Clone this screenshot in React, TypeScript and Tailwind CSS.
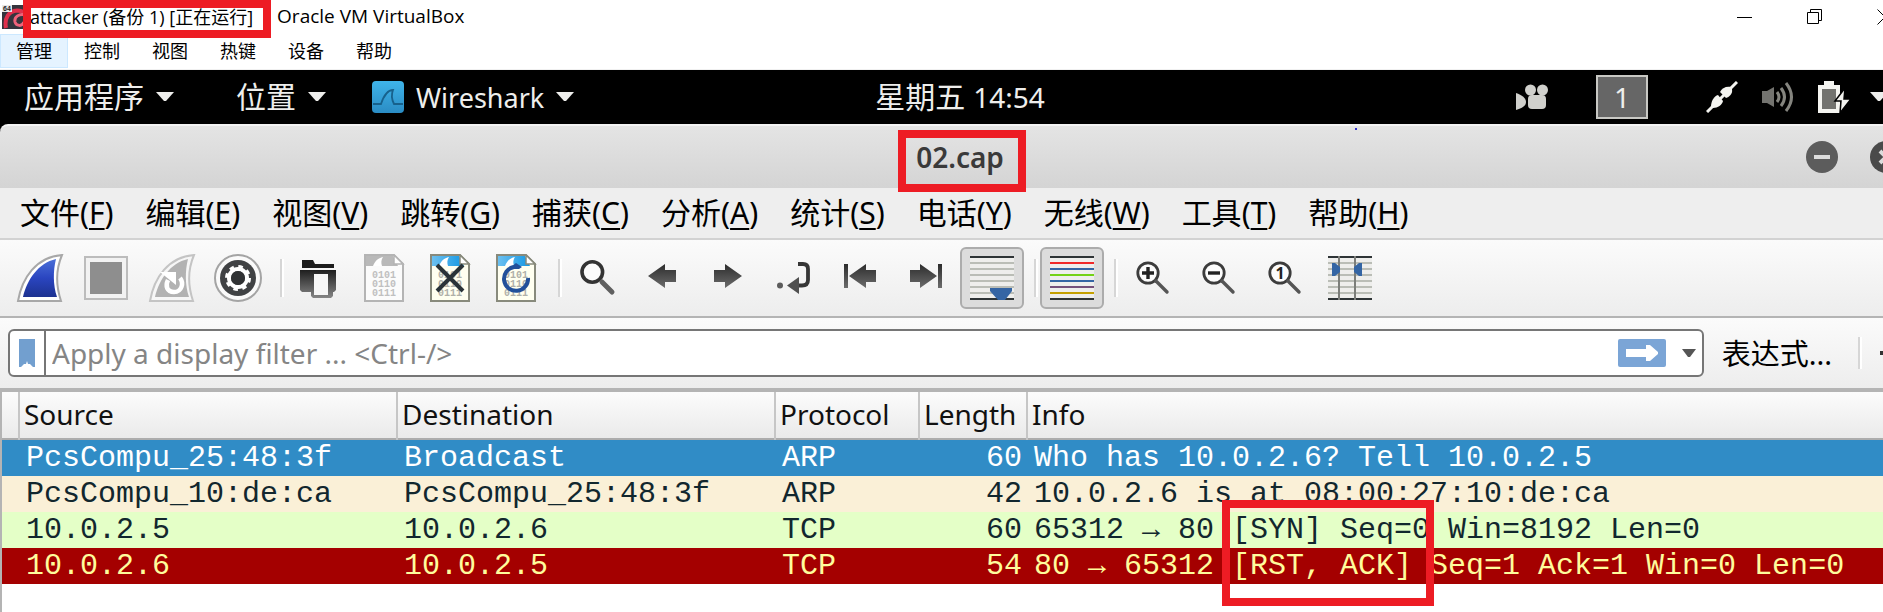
import type { ReactNode } from "react";

const hostMenus = ["管理", "控制", "视图", "热键", "设备", "帮助"];

const menus: [string, string][] = [
  ["文件", "F"],
  ["编辑", "E"],
  ["视图", "V"],
  ["跳转", "G"],
  ["捕获", "C"],
  ["分析", "A"],
  ["统计", "S"],
  ["电话", "Y"],
  ["无线", "W"],
  ["工具", "T"],
  ["帮助", "H"],
];

const packets = [
  { source: "PcsCompu_25:48:3f", destination: "Broadcast", protocol: "ARP", length: 60, info: "Who has 10.0.2.6? Tell 10.0.2.5", tone: "bg-[#308cc6] text-white" },
  { source: "PcsCompu_10:de:ca", destination: "PcsCompu_25:48:3f", protocol: "ARP", length: 42, info: "10.0.2.6 is at 08:00:27:10:de:ca", tone: "bg-[#faf0d7] text-[#12272e]" },
  { source: "10.0.2.5", destination: "10.0.2.6", protocol: "TCP", length: 60, info: "65312 → 80 [SYN] Seq=0 Win=8192 Len=0", tone: "bg-[#e4ffc7] text-[#12272e]" },
  { source: "10.0.2.6", destination: "10.0.2.5", protocol: "TCP", length: 54, info: "80 → 65312 [RST, ACK] Seq=1 Ack=1 Win=0 Len=0", tone: "bg-[#a40000] text-[#fffc9c]" },
];

function Caret() {
  return (
    <svg className="h-[10px] w-[18px] shrink-0" viewBox="0 0 18 10" aria-hidden="true">
      <path d="M0 0H18L10 9H8Z" fill="#eeeeec" />
    </svg>
  );
}

function Icon({ children }: { children: ReactNode }) {
  return (
    <svg className="size-12" viewBox="0 0 48 48" fill="none" aria-hidden="true">
      {children}
    </svg>
  );
}

function Tool({ label, active, children }: { label: string; active?: boolean; children: ReactNode }) {
  return (
    <button
      type="button"
      aria-label={label}
      className={
        active
          ? "flex h-[62px] w-16 shrink-0 items-center justify-center rounded-md border-2 border-[#acacac] bg-[#dcdcdc]"
          : "flex h-[62px] w-16 shrink-0 items-center justify-center"
      }
    >
      <Icon>{children}</Icon>
    </button>
  );
}

function Divider() {
  return (
    <div className="flex h-[38px] w-3 shrink-0 justify-end">
      <div className="w-1 border-l-2 border-[#d6d6d6] bg-white" />
    </div>
  );
}

const FIN = "M46 1C40 15 40 32 45 47H2C6 24 20 3 46 1Z";

function Doc({ muted }: { muted?: boolean }) {
  const edge = muted ? "#b4b4b4" : "#888a7c";
  const digits = muted ? "#c0c0c0" : "#b0b0a8";
  return (
    <>
      <path d="M5 1H34L43 10V47H5Z" fill={muted ? "#fbfbfb" : "#fffff0"} stroke={edge} strokeWidth="2" />
      <path d="M6 2H33L38 12H6Z" fill={muted ? "#b9b9b9" : "url(#banner)"} />
      <path d="M13 12C15 7 18 4 23 3C21 6 21 9 22 12Z" fill="#fff" />
      <path d="M34 1V10H43Z" fill="#fff" stroke={edge} strokeWidth="1.5" />
      <g fill={digits} fontFamily="Liberation Mono, monospace" fontSize="10" fontWeight="700">
        <text x="12" y="24">0101</text>
        <text x="12" y="33">0110</text>
        <text x="12" y="42">0111</text>
      </g>
    </>
  );
}

function Lens({ children }: { children: ReactNode }) {
  return (
    <>
      <circle cx="20" cy="19" r="10.2" fill="#fcfcfc" stroke="#3c3c3c" strokeWidth="2.8" />
      <path d="M28 27L39 38" stroke="#555" strokeWidth="3.4" strokeLinecap="round" />
      {children}
    </>
  );
}

function Rows({ colors }: { colors: string[] }) {
  return (
    <>
      <rect x="2" y="2" width="44" height="44" fill="#eeeeec" />
      {["#2e3436", ...colors, "#2e3436"].map((color, i) => (
        <rect key={i} x="2" y={2 + i * 6} width="44" height="2" fill={color} />
      ))}
    </>
  );
}

const GREY_ROWS = ["#babdb6", "#babdb6", "#babdb6", "#babdb6", "#babdb6", "#babdb6"];
const COLOR_ROWS = ["#ef2929", "#3465a4", "#73d216", "#3465a4", "#75507b", "#c4a000"];

function Gradients() {
  return (
    <svg className="absolute size-0" aria-hidden="true">
      <defs>
        <linearGradient id="fin" x1="0" y1="0" x2="0" y2="1">
          <stop offset="0" stopColor="#4a6fd8" />
          <stop offset="0.5" stopColor="#2a45c0" />
          <stop offset="1" stopColor="#1d3290" />
        </linearGradient>
        <linearGradient id="banner" x1="0" y1="0" x2="1" y2="0">
          <stop offset="0" stopColor="#6cc0f0" />
          <stop offset="1" stopColor="#1598e4" />
        </linearGradient>
        <linearGradient id="steel" x1="0" y1="0" x2="0" y2="1">
          <stop offset="0" stopColor="#2c2c2c" />
          <stop offset="1" stopColor="#6c6c6c" />
        </linearGradient>
        <linearGradient id="folder" x1="0" y1="0" x2="0" y2="1">
          <stop offset="0" stopColor="#1e1e1e" />
          <stop offset="1" stopColor="#868686" />
        </linearGradient>
        <linearGradient id="app" x1="0" y1="0" x2="0" y2="1">
          <stop offset="0" stopColor="#3fb4ea" />
          <stop offset="1" stopColor="#2a8cc4" />
        </linearGradient>
      </defs>
    </svg>
  );
}

function HostWindow() {
  return (
    <header className="font-['Open_Sans','Noto_Sans_CJK_SC',sans-serif] text-lg text-black">
      <div className="relative flex h-[34px] items-center pl-[2px]">
        <svg className="size-6 shrink-0" viewBox="0 0 24 24" aria-hidden="true">
          <rect width="24" height="24" fill="#35353d" />
          <path d="M4 23C2 13 7 6 15 5.500C19 5.500 22 7 24 10" fill="none" stroke="#e0304c" strokeWidth="4" />
          <path d="M24 10C17 8 12 12 13 17C14 21 20 22 22 17" fill="none" stroke="#f0637b" strokeWidth="3" />
          <rect width="10" height="7" fill="#e8e8e8" />
          <text x="1" y="6" fontSize="7" fontWeight="700" fill="#222" fontFamily="Liberation Sans, sans-serif">64</text>
        </svg>
        <h1 className="flex items-center gap-6 pl-1 whitespace-nowrap">
          <span>attacker (备份 1) [正在运行]</span>
          <span className="text-[19px]">Oracle VM VirtualBox</span>
        </h1>
        <div className="absolute top-0 left-[23px] h-[38px] w-[248px] border-8 border-[#ed1c24]" />
        <div className="ml-auto flex">
          <button type="button" aria-label="最小化" className="flex w-[70px] justify-center">
            <svg className="size-4" viewBox="0 0 16 16" aria-hidden="true"><path d="M0 8.5H15" stroke="#000" /></svg>
          </button>
          <button type="button" aria-label="还原" className="flex w-[70px] justify-center">
            <svg className="size-4" viewBox="0 0 16 16" fill="none" stroke="#000" aria-hidden="true">
              <path d="M0.5 3.5H11.5V14.5H0.5ZM3.5 3V0.5H14.5V11.5H12" />
            </svg>
          </button>
          <button type="button" aria-label="关闭" className="flex w-[70px] justify-center">
            <svg className="size-4" viewBox="0 0 16 16" stroke="#000" aria-hidden="true"><path d="M0.5 0.5L15.5 15.5M15.5 0.5L0.5 15.5" /></svg>
          </button>
        </div>
      </div>
      <nav className="flex h-9 items-start border-b border-[#f0f0f0]">
        {hostMenus.map((name, i) => (
          <button
            key={name}
            type="button"
            className={
              i === 0
                ? "flex h-[34px] w-[68px] items-center justify-center border border-[#cce8ff] bg-[#e5f3ff]"
                : "flex h-[34px] w-[68px] items-center justify-center"
            }
          >
            {name}
          </button>
        ))}
      </nav>
    </header>
  );
}

function Panel() {
  return (
    <div className="grid h-[54px] grid-cols-[1fr_auto_1fr] items-center bg-black text-[30px] leading-none text-[#eeeeec]">
      <div className="flex items-center whitespace-nowrap">
        <button type="button" className="flex items-center gap-3 pl-6">应用程序<Caret /></button>
        <button type="button" className="flex items-center gap-3 pl-[62px]">位置<Caret /></button>
        <button type="button" className="flex items-center gap-3 pl-[46px]">
          <svg className="size-8" viewBox="0 0 32 32" aria-hidden="true">
            <rect width="32" height="32" rx="4" fill="url(#app)" />
            <path d="M1 23H9C11 17 14 9 21 9C19 14 20 19 22 23H31" fill="none" stroke="#17618c" strokeWidth="1.8" />
          </svg>
          <span className="text-[27px]">Wireshark</span>
          <Caret />
        </button>
      </div>
      <time className="flex items-center gap-2 whitespace-nowrap">
        星期五<span className="text-[28px]">14:54</span>
      </time>
      <div className="flex items-center justify-end pr-8">
        <svg className="mr-12 size-8" viewBox="0 0 32 32" fill="#d0d0cc" aria-hidden="true">
          <circle cx="14.5" cy="9" r="5.5" />
          <circle cx="26.5" cy="9" r="5.5" />
          <rect x="12" y="14" width="18" height="14" rx="4" />
          <path d="M0 12C6 14 10 17 10 21C10 25 6 27 0 29Z" />
        </svg>
        <button type="button" className="mr-[58px] h-11 w-[52px] border-2 border-[#c8c8c4] bg-[#666] text-[28px] leading-none">1</button>
        <svg className="mr-6 size-8" viewBox="0 0 32 32" fill="#f4f4f0" aria-hidden="true">
          <path d="M1 31L31 1" stroke="#f4f4f0" strokeWidth="3" />
          <path d="M5 26C5 20 8 15 12 14L17 20C16 24 12 27 7 27Z" />
          <path d="M14 11C16 7 20 5 25 6L26 8C27 13 23 16 20 17Z" />
        </svg>
        <svg className="mr-6 size-8" viewBox="0 0 32 32" fill="none" aria-hidden="true">
          <path d="M0 10H5L12 6V26L5 22H0Z" fill="#73736f" />
          <path d="M15 11Q19 16 15 21M19 7Q26 16 19 25M24 2Q35 16 24 30" stroke="#85857f" strokeWidth="3" />
        </svg>
        <svg className="mr-5 size-8" viewBox="0 0 32 32" aria-hidden="true">
          <path d="M6 0H16V4H22V32H0V4H6Z" fill="#f4f4f0" />
          <rect x="4" y="8" width="14" height="20" fill="#73736f" />
          <path d="M27 7L17 20H23L22 32L33 18H26Z" fill="#f4f4f0" stroke="#000" strokeWidth="1.5" />
        </svg>
        <Caret />
      </div>
    </div>
  );
}

function TitleBar() {
  return (
    <div className="relative grid h-[64px] grid-cols-[1fr_auto_1fr] items-center rounded-t-lg border-t-2 border-[#f4f4f4] bg-linear-to-b from-[#e4e4e4] to-[#d4d4d4]">
      <span />
      <h2 className="relative flex h-full items-center text-[28px] leading-none font-semibold text-[#3a3a3a]">
        02.cap
        <div className="absolute top-1 -left-[18px] h-[62px] w-32 border-8 border-[#ed1c24]" />
      </h2>
      <div className="flex justify-end gap-8 pr-[18px]">
        <button type="button" aria-label="最小化">
          <svg className="size-8" viewBox="0 0 32 32" aria-hidden="true">
            <circle cx="16" cy="16" r="16" fill="#5c5c5c" />
            <path d="M8 16H24" stroke="#dcdcdc" strokeWidth="4" />
          </svg>
        </button>
        <button type="button" aria-label="关闭">
          <svg className="size-8" viewBox="0 0 32 32" aria-hidden="true">
            <circle cx="16" cy="16" r="16" fill="#4a4a4a" />
            <path d="M10 10L22 22M22 10L10 22" stroke="#dcdcdc" strokeWidth="4" />
          </svg>
        </button>
      </div>
      <span className="absolute top-[2px] left-[1355px] size-[2px] bg-[#3030d0]" />
    </div>
  );
}

function Toolbar() {
  return (
    <div className="flex h-[78px] items-center gap-[2px] border-b-2 border-[#b4b4b4] bg-linear-to-b from-[#fbfbfb] to-[#ededed] pl-2">
      <Tool label="开始捕获">
        <path d={FIN} fill="#fff" stroke="#a8a8a8" strokeWidth="2" />
        <path d="M40 5C37 17 37 31 41 43H7C11 26 22 9 40 5Z" fill="url(#fin)" />
      </Tool>
      <Tool label="停止捕获">
        <rect x="3" y="3" width="42" height="42" fill="#f2f2f2" stroke="#bcbcbc" strokeWidth="2" />
        <rect x="8" y="8" width="32" height="32" fill="#8e8e8e" />
      </Tool>
      <Tool label="重新开始捕获">
        <path d={FIN} fill="#f6f6f6" stroke="#c4c4c4" strokeWidth="2" />
        <path d="M40 5C37 17 37 31 41 43H7C11 26 22 9 40 5Z" fill="#b2b2b2" />
        <path d="M32 24C36 29 34 38 26 38C19 38 17 32 20 26" stroke="#fff" strokeWidth="4.5" />
        <path d="M12 18H28V31Z" fill="#fff" />
      </Tool>
      <Tool label="捕获选项">
        <circle cx="24" cy="24" r="23" fill="#fafafa" stroke="#a4a4a4" strokeWidth="2" />
        <circle cx="24" cy="24" r="18" fill="#404244" />
        <circle cx="24" cy="24" r="9" stroke="#fff" strokeWidth="4" />
        <circle cx="24" cy="24" r="11.500" stroke="#fff" strokeWidth="3" strokeDasharray="4.5 4.53" />
        <circle cx="24" cy="24" r="7" fill="#303234" />
      </Tool>
      <Divider />
      <Tool label="打开">
        <path d="M8 6H19L21 10H40V14H8Z" fill="#1c1c1c" />
        <path d="M6 16H42V36L40 38H39V42L37 44H19L17 42V38H8L6 36Z" fill="url(#folder)" />
        <rect x="20" y="20" width="14" height="21" fill="#f6f6f6" />
      </Tool>
      <Tool label="保存"><Doc muted /></Tool>
      <Tool label="关闭文件">
        <Doc />
        <path d="M11 11L37 37M37 11L11 37" stroke="#2a3338" strokeWidth="4" />
      </Tool>
      <Tool label="重新加载">
        <Doc />
        <path d="M22 13A12 12 0 1 0 36 24" stroke="#22509a" strokeWidth="4" />
        <path d="M19 13L24 9L30 13L27 15H19Z" fill="#22509a" />
      </Tool>
      <Divider />
      <Tool label="查找分组">
        <circle cx="20.3" cy="18" r="10.3" fill="#fbfbfb" stroke="#333" strokeWidth="3.6" />
        <path d="M30 28L40 38" stroke="#606060" strokeWidth="5" strokeLinecap="round" />
      </Tool>
      <Tool label="上一分组"><path d="M10 22L27 10V16H38V28H27V34Z" fill="url(#steel)" /></Tool>
      <Tool label="下一分组"><path d="M38 22L21 10V16H10V28H21V34Z" fill="url(#steel)" /></Tool>
      <Tool label="转到分组">
        <circle cx="10" cy="31.5" r="3" fill="#5c5c5c" />
        <path d="M28 10H33Q38 10 38 15V26Q38 31.5 32 31.5H28" stroke="#363636" strokeWidth="3.8" />
        <path d="M17 31.5L29 23V40Z" fill="#505050" />
      </Tool>
      <Tool label="首个分组">
        <path d="M8 10H12V34H8Z" fill="url(#steel)" />
        <path d="M13 22L30 10V16H40V28H30V34Z" fill="url(#steel)" />
      </Tool>
      <Tool label="最新分组">
        <path d="M36 10H40V34H36Z" fill="url(#steel)" />
        <path d="M35 22L18 10V16H8V28H18V34Z" fill="url(#steel)" />
      </Tool>
      <Tool label="自动滚动" active>
        <Rows colors={GREY_ROWS} />
        <path d="M22 34H44V37L37 46H30L22 37Z" fill="#3465a4" />
      </Tool>
      <Divider />
      <Tool label="着色" active><Rows colors={COLOR_ROWS} /></Tool>
      <Divider />
      <Tool label="放大"><Lens><path d="M14 19H26M20 13V25" stroke="#222" strokeWidth="3.4" /></Lens></Tool>
      <Tool label="缩小"><Lens><path d="M14 19H26" stroke="#222" strokeWidth="3.4" /></Lens></Tool>
      <Tool label="原始大小">
        <Lens>
          <text x="20" y="25" textAnchor="middle" fill="#222" fontSize="16" fontWeight="700" fontFamily="Noto Sans, sans-serif">1</text>
        </Lens>
      </Tool>
      <Tool label="调整列宽">
        <Rows colors={GREY_ROWS} />
        <path d="M13 2V46M29 2V46" stroke="#7c7e7a" strokeWidth="2" />
        <path d="M6 9H9L14 13V18L9 22H6ZM36 9H33L28 13V18L33 22H36Z" fill="#3465a4" />
      </Tool>
    </div>
  );
}

function FilterBar() {
  return (
    <div className="flex h-[70px] items-center bg-linear-to-b from-[#fbfbfb] to-[#ededed] pr-2 pl-2">
      <div className="flex h-12 flex-1 items-center rounded-md border-2 border-[#767676] bg-white">
        <button type="button" aria-label="书签" className="flex h-full w-9 items-center justify-center border-r-2 border-[#767676]">
          <svg className="h-7 w-4" viewBox="0 0 16 28" aria-hidden="true"><path d="M0 0H16V28H14L11 25H9L8 22L7 25H5L2 28H0Z" fill="#729fcf" /></svg>
        </button>
        <input
          type="text"
          aria-label="显示过滤器"
          placeholder="Apply a display filter ... <Ctrl-/>"
          className="h-full min-w-0 flex-1 bg-transparent pl-[6px] text-[28px] outline-none placeholder:text-[#858585]"
        />
        <button type="button" aria-label="应用" className="mr-4">
          <svg className="h-7 w-12" viewBox="0 0 48 28" aria-hidden="true">
            <rect width="48" height="28" rx="2" fill="#7ba5d6" />
            <path d="M8 10H28V6H32L40 13V15L32 22H28V18H8Z" fill="#fff" />
          </svg>
        </button>
        <button type="button" aria-label="历史" className="mr-[6px]">
          <svg className="h-2 w-[14px]" viewBox="0 0 14 8" aria-hidden="true"><path d="M0 0H14L8 8H6Z" fill="#555" /></svg>
        </button>
      </div>
      <button type="button" className="ml-[18px] text-[29px] leading-none whitespace-nowrap">表达式...</button>
      <div className="ml-[26px] h-8 w-1 border-l-2 border-[#d6d6d6] bg-white" />
      <button type="button" aria-label="添加" className="ml-[18px]">
        <svg className="size-8" viewBox="0 0 32 32" aria-hidden="true"><path d="M0 16H32M16 0V32" stroke="#333" strokeWidth="4" /></svg>
      </button>
    </div>
  );
}

function PacketList() {
  return (
    <main className="flex-1 border-t-4 border-l-2 border-[#b4b4b4] bg-white">
      <div className="relative">
        <table className="w-full table-fixed border-separate border-spacing-0 text-left whitespace-pre">
          <colgroup>
            <col className="w-[18px]" />
            <col className="w-[378px]" />
            <col className="w-[378px]" />
            <col className="w-36" />
            <col className="w-[108px]" />
            <col />
          </colgroup>
          <thead>
            <tr className="h-12 bg-linear-to-b from-[#fcfcfc] to-[#e9e9e9] text-[28px] leading-none text-[#111] shadow-[inset_0_-2px_0_#acacac]">
              <th className="border-r-2 border-[#c6c6c6]" aria-label="No." />
              <th className="border-r-2 border-[#c6c6c6] pb-1 pl-1 font-normal">Source</th>
              <th className="border-r-2 border-[#c6c6c6] pb-1 pl-1 font-normal">Destination</th>
              <th className="border-r-2 border-[#c6c6c6] pb-1 pl-1 font-normal">Protocol</th>
              <th className="border-r-2 border-[#c6c6c6] pb-1 pl-1 font-normal">Length</th>
              <th className="pb-1 pl-1 font-normal">Info</th>
            </tr>
          </thead>
          <tbody className="font-['Liberation_Mono',monospace] text-[30px] leading-9">
            {packets.map((p) => (
              <tr key={p.info} className={p.tone}>
                <td />
                <td className="pl-[6px]">{p.source}</td>
                <td className="pl-[6px]">{p.destination}</td>
                <td className="pl-[6px]">{p.protocol}</td>
                <td className="pr-[6px] text-right">{p.length}</td>
                <td className="pl-[6px]">{p.info}</td>
              </tr>
            ))}
          </tbody>
        </table>
        <div className="absolute top-[108px] left-[1220px] h-[106px] w-[212px] border-8 border-[#ed1c24]" />
      </div>
    </main>
  );
}

export default function App() {
  return (
    <div className="overflow-hidden bg-white">
      <Gradients />
      <div className="flex min-h-screen w-[calc(100%+37px)] flex-col">
        <HostWindow />
        <div className="flex flex-1 flex-col bg-black font-['Noto_Sans','Noto_Sans_CJK_SC',sans-serif] text-black">
          <Panel />
          <TitleBar />
          <nav className="flex h-[52px] items-center border-b-2 border-[#d2d2d2] bg-[#eee] pl-1">
            {menus.map(([name, key]) => (
              <button key={key} type="button" className="px-4 text-[30px] leading-none whitespace-nowrap">
                {name}(<span className="underline decoration-2 underline-offset-4">{key}</span>)
              </button>
            ))}
          </nav>
          <Toolbar />
          <FilterBar />
          <PacketList />
        </div>
      </div>
    </div>
  );
}
